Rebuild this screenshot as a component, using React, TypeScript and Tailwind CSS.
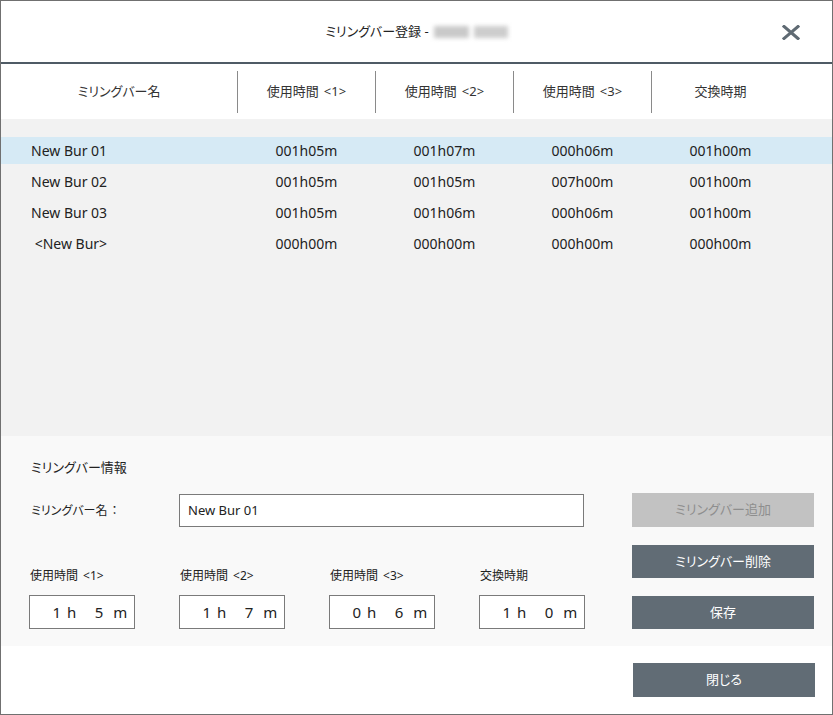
import React from "react";

const jp = "font-['Noto_Sans','Noto_Sans_CJK_JP',sans-serif] [font-feature-settings:'palt']";

const columns = ["使用時間 <1>", "使用時間 <2>", "使用時間 <3>", "交換時期"];

const rows = [
  { name: "New Bur 01", t: ["001h05m", "001h07m", "000h06m", "001h00m"], active: true },
  { name: "New Bur 02", t: ["001h05m", "001h05m", "007h00m", "001h00m"] },
  { name: "New Bur 03", t: ["001h05m", "001h06m", "000h06m", "001h00m"] },
  { name: " <New Bur>", t: ["000h00m", "000h00m", "000h00m", "000h00m"] },
];

const fields = [
  { label: "使用時間", tag: "<1>", h: "1", m: "5" },
  { label: "使用時間", tag: "<2>", h: "1", m: "7" },
  { label: "使用時間", tag: "<3>", h: "0", m: "6" },
  { label: "交換時期", tag: "", h: "1", m: "0" },
];

function CloseIcon() {
  return (
    <svg width="18" height="15" viewBox="0 0 18 15">
      <path d="M2 1.5 L16 13.5 M16 1.5 L2 13.5" stroke="#5f6a73" strokeWidth="3" strokeLinecap="square" />
    </svg>
  );
}

function TimeBox({ h, m }: { h: string; m: string }) {
  return (
    <div className="flex h-[34px] w-[106px] items-center border border-[#7a7a7a] bg-white pl-[18px] text-[15px] text-[#222]">
      <span className="w-[13px] text-right">{h}</span>
      <span className="ml-[6px]">h</span>
      <span className="w-[27px] text-right">{m}</span>
      <span className="ml-[10px]">m</span>
    </div>
  );
}

export default function App() {
  return (
    <div className={`flex h-[715px] w-[833px] flex-col border border-[#707070] bg-white text-[#222] ${jp}`}>
      {/* title */}
      <div className="relative flex h-[63px] shrink-0 items-center justify-center border-b-2 border-[#4f5b65]">
        <div className="flex items-center text-[13px] text-[#222]">
          <span>ミリングバー登録 -</span>
          <span className="ml-[5px] flex gap-[5px] blur-[2px]">
            <span className="h-[12px] w-[35px] bg-[#c9c9c9]" />
            <span className="h-[12px] w-[34px] bg-[#cdcdcd]" />
          </span>
        </div>
        <div className="absolute right-[32px] top-[24px]">
          <CloseIcon />
        </div>
      </div>

      {/* column headers */}
      <div className="flex h-[55px] shrink-0 items-center text-[13px] text-[#333]">
        <div className="flex w-[236px] justify-center">ミリングバー名</div>
        {columns.map((c) => (
          <div key={c} className="flex h-[42px] w-[138px] items-center justify-center gap-[5px] border-l border-[#8a8a8a]">
            {c.split(" ").map((p) => (
              <span key={p}>{p}</span>
            ))}
          </div>
        ))}
      </div>

      {/* list */}
      <div className="flex h-[317px] shrink-0 flex-col gap-[4px] bg-[#f2f2f2] pt-[18px] text-[14px]">
        {rows.map((r) => (
          <div
            key={r.name}
            className={`flex h-[27px] items-center ${r.active ? "bg-[#d6eaf5]" : ""}`}
          >
            <div className="w-[236px] whitespace-pre pl-[30px]">{r.name}</div>
            {r.t.map((v, i) => (
              <div key={i} className="w-[138px] pl-px text-center">
                {v}
              </div>
            ))}
          </div>
        ))}
      </div>

      {/* editor */}
      <div className="flex h-[210px] shrink-0 bg-[#f9f9f9]">
        <div className="flex flex-1 flex-col pl-[28px] pt-[21px]">
          <div className="ml-[2px] h-[20px] text-[13px] leading-[20px]">ミリングバー情報</div>
          <div className="mt-[17px] flex items-center">
            <div className="ml-[2px] flex w-[148px] gap-[4px] text-[12px]">
              <span>ミリングバー名</span>
              <span>：</span>
            </div>
            <div className="flex h-[33px] w-[405px] items-center border border-[#7a7a7a] bg-white pl-[8px] text-[13px]">
              New Bur 01
            </div>
          </div>
          <div className="mt-[39px] flex gap-[44px]">
            {fields.map((f) => (
              <div key={f.label + f.tag} className="flex flex-col">
                <div className="ml-[1px] flex h-[20px] gap-[5px] text-[12px] leading-[20px]">
                  <span>{f.label}</span>
                  {f.tag && <span>{f.tag}</span>}
                </div>
                <div className="mt-[9px]">
                  <TimeBox h={f.h} m={f.m} />
                </div>
              </div>
            ))}
          </div>
        </div>
        <div className="mr-[18px] flex w-[182px] flex-col gap-[18px] pt-[57px] text-[13px]">
          <div className="flex h-[34px] items-center justify-center bg-[#c2c2c2] text-[#8e8e8e]">ミリングバー追加</div>
          <div className="flex h-[33px] items-center justify-center bg-[#616c75] text-white">ミリングバー削除</div>
          <div className="flex h-[33px] items-center justify-center bg-[#616c75] text-white">保存</div>
        </div>
      </div>

      {/* footer */}
      <div className="flex flex-1 justify-end pr-[17px] pt-[17px]">
        <div className="flex h-[34px] w-[182px] items-center justify-center bg-[#616c75] text-[13px] text-white">閉じる</div>
      </div>
    </div>
  );
}
